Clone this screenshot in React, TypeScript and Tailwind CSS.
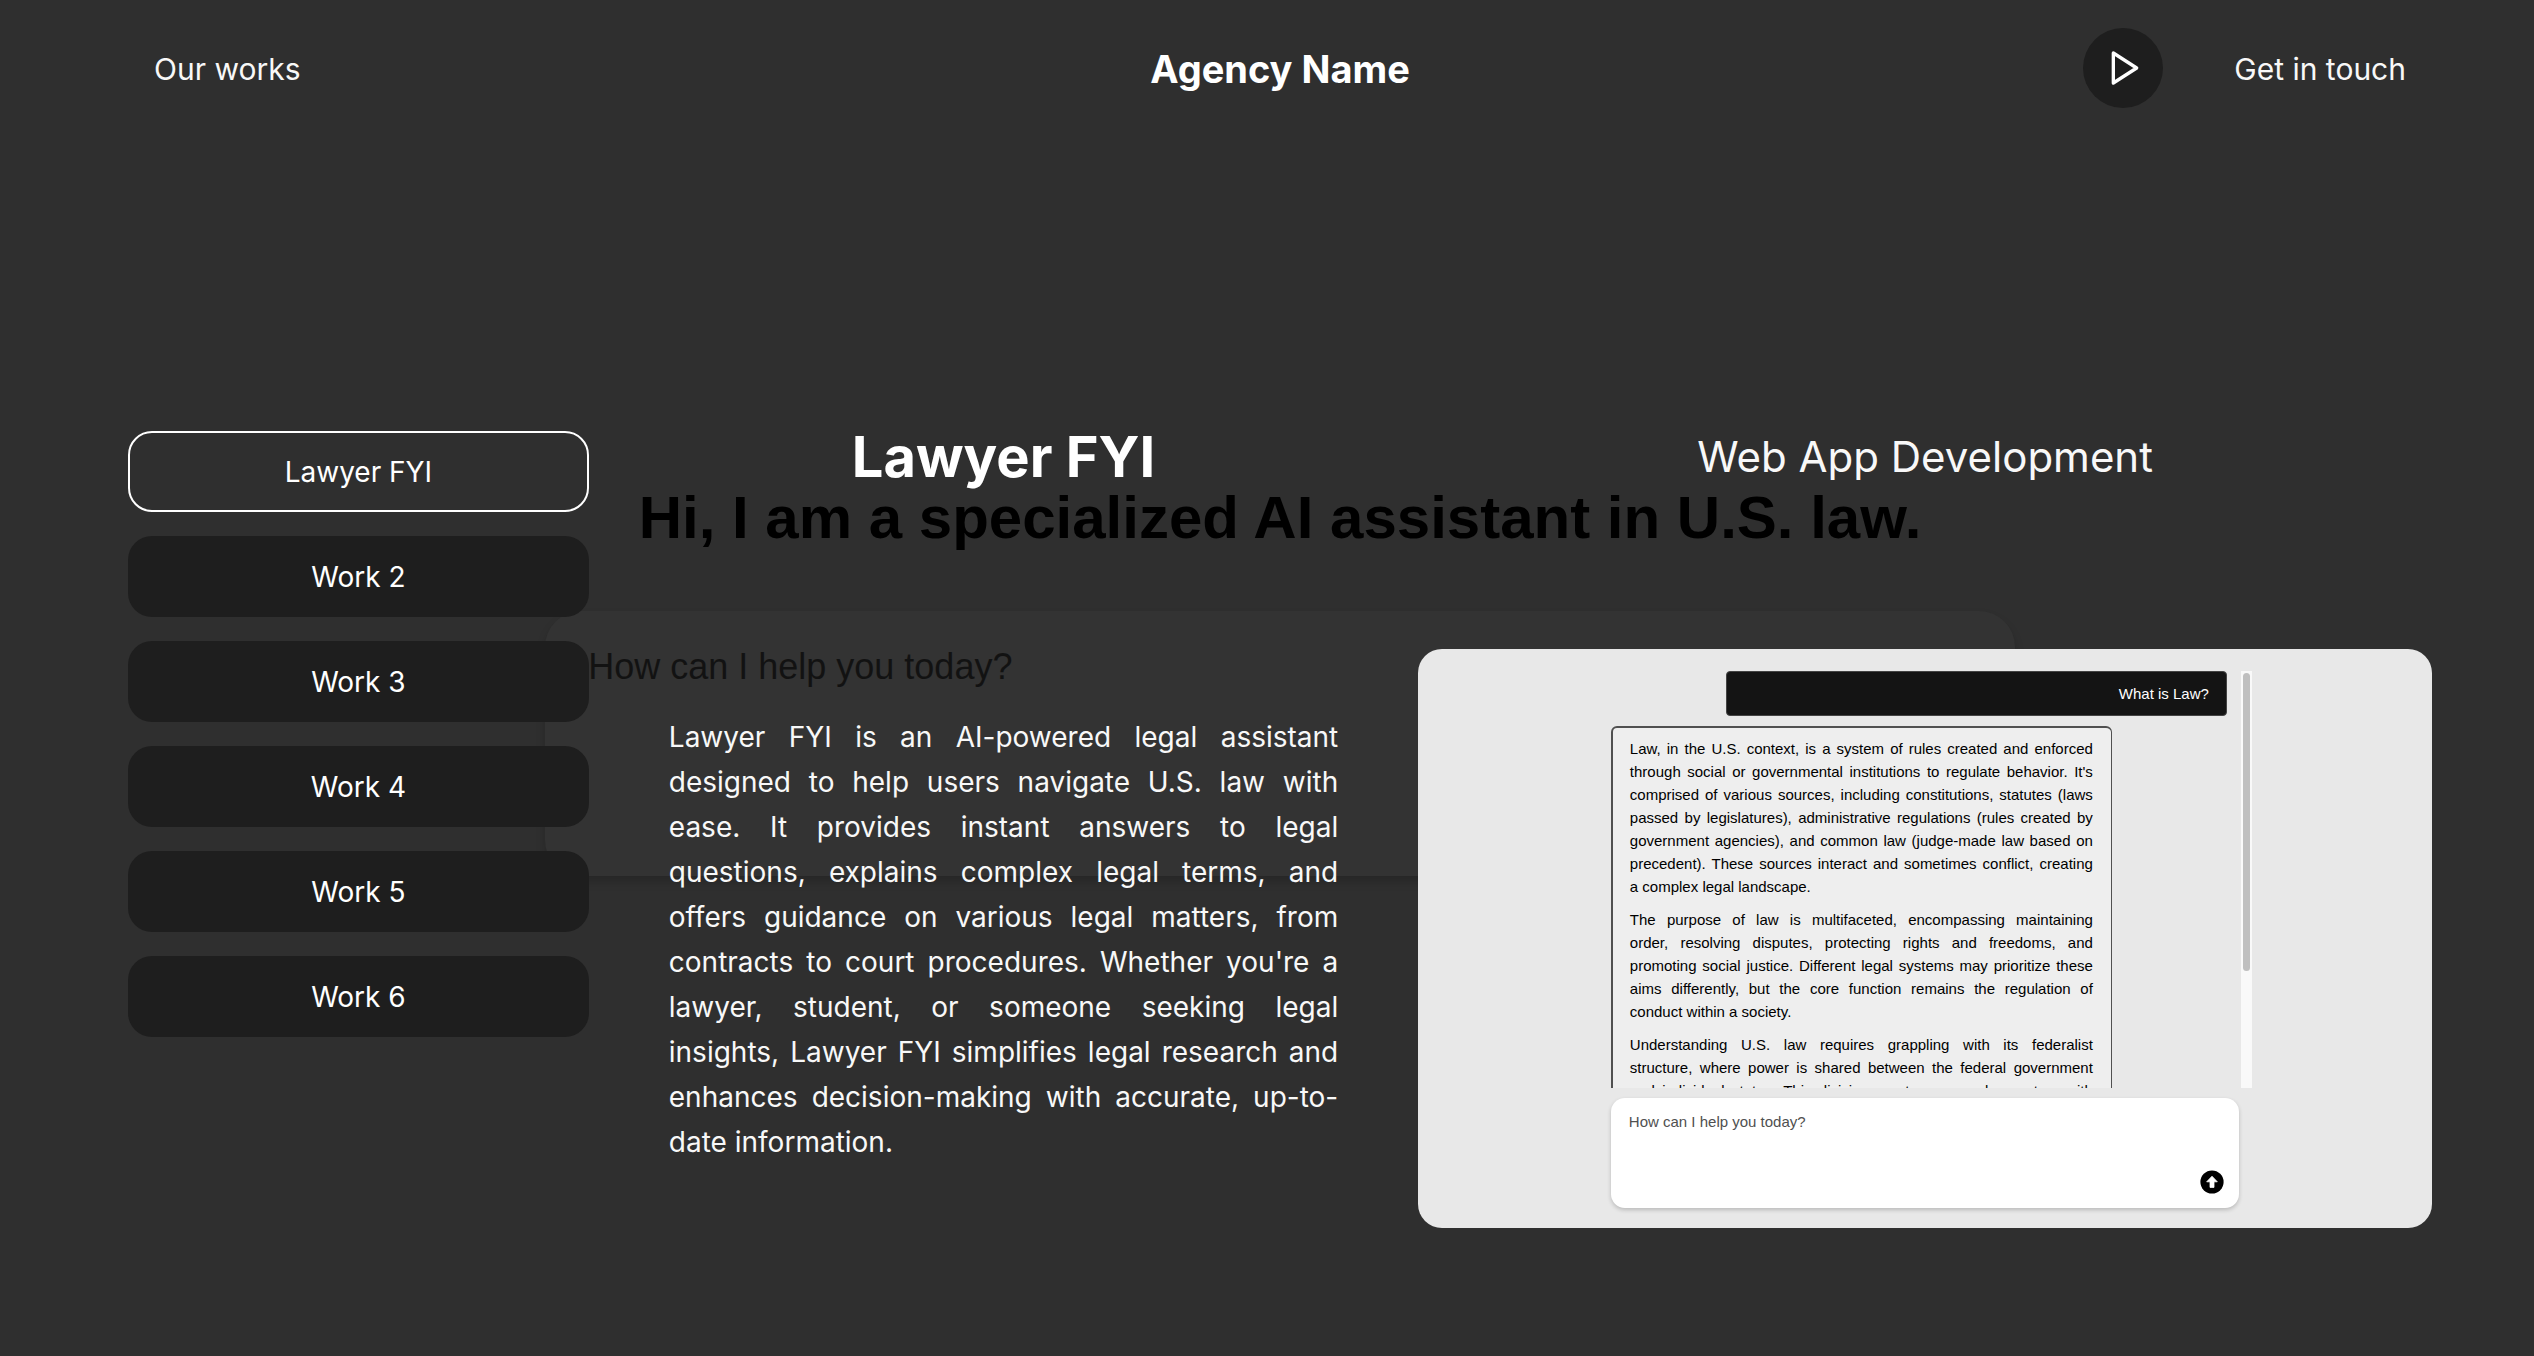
import { FiPlay } from "react-icons/fi";

const works = ["Lawyer FYI", "Work 2", "Work 3", "Work 4", "Work 5", "Work 6"];

const answer = [
  "Law, in the U.S. context, is a system of rules created and enforced through social or governmental institutions to regulate behavior. It's comprised of various sources, including constitutions, statutes (laws passed by legislatures), administrative regulations (rules created by government agencies), and common law (judge-made law based on precedent). These sources interact and sometimes conflict, creating a\u00a0complex legal landscape.",
  "The purpose of law is multifaceted, encompassing maintaining order,\u00a0resolving disputes, protecting rights and freedoms, and promoting\u00a0social justice. Different legal systems may prioritize these aims\u00a0differently, but the core function remains the regulation of conduct\u00a0within a society.",
  "Understanding U.S. law requires grappling with its federalist structure,\u00a0where power is shared between the federal government and\u00a0individual states. This division creates a complex system with overlapping\u00a0jurisdictions.",
];

function Header() {
  return (
    <header className="grid grid-cols-[1fr_auto_1fr] items-center py-7 pl-[154px] pr-32">
      <a href="#works" className="justify-self-start pt-px text-[30px] leading-10 text-[#f8f8f8]">
        Our works
      </a>
      <p className="pt-px text-[38px] leading-12 font-bold text-white">Agency Name</p>
      <div className="flex items-center gap-[71px] justify-self-end">
        <button
          type="button"
          aria-label="Play"
          className="flex size-20 items-center justify-center rounded-full bg-[#1e1e1e] pl-[3px] text-white"
        >
          <FiPlay className="size-10" />
        </button>
        <a href="#contact" className="pt-px text-[30px] leading-10 text-[#f8f8f8]">
          Get in touch
        </a>
      </div>
    </header>
  );
}

function Backdrop() {
  return (
    <div
      aria-hidden="true"
      className="absolute inset-x-0 top-[482px] flex flex-col items-center gap-[57px] pl-[26px] font-['Liberation_Sans',Arial,sans-serif]"
    >
      <p className="text-[60px] leading-[72px] font-bold text-black">
        Hi, I am a specialized AI assistant in U.S. law.
      </p>
      <div className="h-[265px] w-[58.6%] rounded-[36px] bg-[#333333] px-[43px] py-9 text-[36px] leading-10 text-[#121212] shadow-[0_6px_10px_rgba(0,0,0,0.18)]">
        How can I help you today?
      </div>
    </div>
  );
}

function WorkList() {
  return (
    <nav aria-label="Works" className="flex flex-col gap-6">
      {works.map((work, i) => (
        <button
          key={work}
          type="button"
          className={
            i === 0
              ? "h-[81px] rounded-3xl border-2 border-white bg-[#2f2f2f] text-[28px] leading-10 text-white"
              : "h-[81px] rounded-3xl bg-[#1e1e1e] text-[28px] leading-10 text-white"
          }
        >
          {work}
        </button>
      ))}
    </nav>
  );
}

function SendIcon() {
  return (
    <svg viewBox="0 0 24 24" className="size-6" aria-hidden="true">
      <circle cx="12" cy="12" r="11.6" fill="#000" />
      <path
        d="M12 6.2 17.3 11.8H14V17.4H10V11.8H6.7Z"
        fill="#fff"
        stroke="#fff"
        strokeWidth="0.8"
        strokeLinejoin="round"
      />
    </svg>
  );
}

function ChatPreview() {
  return (
    <div className="flex justify-center rounded-3xl bg-[#e8e8e8] pt-[22px] pb-5 font-['Liberation_Sans',Arial,sans-serif] text-[15px] leading-[23px] text-black">
      <div className="flex w-[62%] flex-col gap-[10px]">
        <div className="-mr-[13px] flex h-[417px] justify-between overflow-hidden">
          <div className="flex w-[616px] flex-col gap-[10px]">
            <div className="h-[45px] w-[501px] shrink-0 self-end rounded-sm border border-[#444] bg-[#141414] px-[17px] py-[10px] text-right text-white">
              What is Law?
            </div>
            <div className="flex w-[501px] shrink-0 flex-col gap-[10px] rounded-md border-2 border-r border-[#505050] bg-[#eeeeee] pr-[18px] pl-[17px] py-[9px] text-justify">
              {answer.map((text) => (
                <p key={text}>{text}</p>
              ))}
            </div>
          </div>
          <div className="flex w-[11px] justify-center bg-[#f9f9f9] pt-[2px]">
            <div className="h-[298px] w-[7px] rounded-full bg-[#bfbfbf]" />
          </div>
        </div>
        <div className="flex h-[110px] rounded-[14px] bg-white py-3 pr-[15px] pl-[18px] shadow-[0_2px_4px_rgba(0,0,0,0.2)]">
          <textarea
            aria-label="Message"
            placeholder="How can I help you today?"
            className="h-full flex-1 resize-none bg-transparent outline-none placeholder:text-[#505050]"
          />
          <button type="button" aria-label="Send" className="self-end pb-[2px]">
            <SendIcon />
          </button>
        </div>
      </div>
    </div>
  );
}

export default function App() {
  return (
    <div className="relative min-h-screen bg-[#2f2f2f] font-['Inter','Liberation_Sans',sans-serif]">
      <Backdrop />
      <div className="relative">
        <Header />
        <main className="grid grid-cols-[20fr_80fr] items-start pt-[295px] pr-[102px] pl-32">
          <WorkList />
          <section className="grid grid-cols-[36fr_44fr] items-center gap-y-[166px]">
            <h1 className="text-center text-[56px] leading-[52px] font-bold text-white">Lawyer FYI</h1>
            <h2 className="text-center text-[42px] leading-[52px] text-[#f8f8f8]">Web App Development</h2>
            <p className="px-20 pt-[3px] text-justify text-[28px] leading-[45px] text-[#f8f8f8]">
              Lawyer FYI is an AI-powered legal assistant designed to help users navigate U.S. law with ease. It
              provides instant answers to legal questions, explains complex legal terms, and offers guidance on
              various legal matters, from contracts to court procedures. Whether you're a lawyer, student, or
              someone seeking legal insights, Lawyer FYI simplifies legal research and enhances decision-making
              with accurate, up-to-date information.
            </p>
            <ChatPreview />
          </section>
        </main>
      </div>
    </div>
  );
}
